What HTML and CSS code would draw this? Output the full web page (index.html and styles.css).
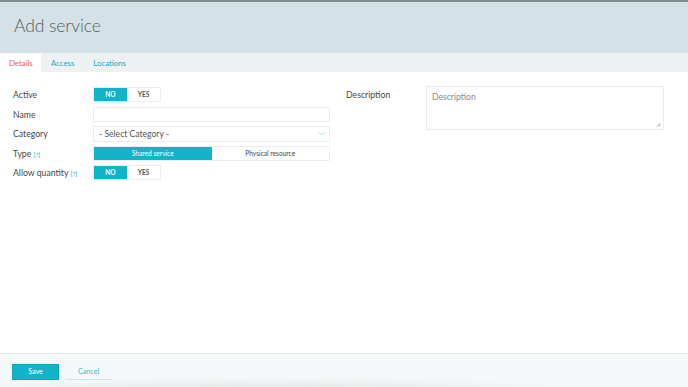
FILE: index.html
```html
<!DOCTYPE html>
<html>
<head>
<meta charset="utf-8">
<link rel="stylesheet" href="styles.css">
</head>
<body>
<div class="page">
  <header class="header">
    <h1 class="title">Add service</h1>
  </header>
  <nav class="tabs">
    <span class="tab active">Details</span>
    <span class="tab">Access</span>
    <span class="tab">Locations</span>
  </nav>
  <main class="content">
    <div class="col left">
      <div class="row">
        <label class="label">Active</label>
        <div class="toggle">
          <span class="opt on">NO</span>
          <span class="opt">YES</span>
        </div>
      </div>
      <div class="row">
        <label class="label">Name</label>
        <div class="input"></div>
      </div>
      <div class="row">
        <label class="label">Category</label>
        <div class="input select">
          <span>- Select Category -</span>
          <svg class="chev" width="7" height="5" viewBox="0 0 7 5"><path d="M0.5 1 L3.5 4 L6.5 1" fill="none" stroke="#8fd8e2" stroke-width="0.9"/></svg>
        </div>
      </div>
      <div class="row">
        <label class="label">Type <span class="help">[?]</span></label>
        <div class="seg">
          <span class="segopt on">Shared service</span>
          <span class="segopt">Physical resource</span>
        </div>
      </div>
      <div class="row">
        <label class="label">Allow quantity <span class="help">[?]</span></label>
        <div class="toggle">
          <span class="opt on">NO</span>
          <span class="opt">YES</span>
        </div>
      </div>
    </div>
    <div class="col right">
      <label class="label dlabel">Description</label>
      <div class="textarea">
        <span class="ph">Description</span>
        <svg class="grip" width="5" height="5" viewBox="0 0 5 5"><path d="M1 4.5 L4.5 1 M3 4.5 L4.5 3" stroke="#888" stroke-width="0.7"/></svg>
      </div>
    </div>
  </main>
  <footer class="footer">
    <button class="btn save">Save</button>
    <button class="btn cancel">Cancel</button>
  </footer>
</div>
</body>
</html>
```
FILE: styles.css
```css
* { box-sizing: border-box; }
html, body { margin: 0; padding: 0; }
body {
  width: 688px;
  height: 387px;
  overflow: hidden;
  font-family: Lato, "Noto Sans", sans-serif;
  color: #3a3a3a;
  background: #fff;
}
.page {
  display: flex;
  flex-direction: column;
  height: 387px;
}
.header {
  height: 53px;
  background: #d4e2e7;
  border-top: 2px solid #7d8b8c;
  display: flex;
  align-items: center;
  padding-left: 14px;
}
.title {
  margin: 0;
  font-weight: 300;
  font-size: 17.5px;
  color: #555c60;
  letter-spacing: -0.1px;
  padding-bottom: 5px;
}
.tabs {
  height: 19px;
  background: #edf1f2;
  display: flex;
  align-items: stretch;
}
.tab {
  font-size: 7.8px;
  color: #1aa9c1;
  display: flex;
  align-items: center;
  padding: 0 9px;
}
.tab:first-child { width: 41px; }
.tab:nth-child(2) { padding-left: 10px; padding-right: 10px; }
.tab.active {
  background: #fff;
  color: #ea5c53;
}
.content {
  flex: 1;
  display: flex;
  padding: 15px 0 0 13px;
}
.col.left {
  width: 317px;
  display: flex;
  flex-direction: column;
  gap: 4px;
}
.row {
  display: flex;
  align-items: center;
  height: 15.5px;
}
.label {
  width: 80px;
  font-size: 8.7px;
  color: #474747;
  flex: none;
}
.help {
  font-size: 6.3px;
  color: #1aa9c1;
}
.toggle {
  display: flex;
  height: 15px;
  border: 1px solid #eaeff0;
}
.opt {
  width: 33px;
  display: flex;
  align-items: center;
  justify-content: center;
  font-size: 6.5px;
  font-weight: 700;
  color: #555;
  background: #fff;
}
.opt.on {
  background: #11b4c9;
  color: #fff;
}
.input {
  width: 237px;
  height: 15.5px;
  border: 1px solid #e9eef0;
  background: #fff;
}
.select {
  display: flex;
  align-items: center;
  justify-content: space-between;
  padding: 0 4px 0 5px;
  font-size: 8.6px;
  color: #555;
}
.seg {
  display: flex;
  width: 237px;
  height: 15.5px;
  border: 1px solid #e9eef0;
}
.segopt {
  flex: 1;
  display: flex;
  align-items: center;
  justify-content: center;
  font-size: 6.6px;
  color: #444;
}
.segopt.on {
  background: #11b4c9;
  color: #fff;
}
.col.right {
  display: flex;
  align-items: flex-start;
  margin-left: 16px;
  margin-top: -1px;
}
.dlabel {
  padding-top: 3px;
}
.textarea {
  position: relative;
  width: 238px;
  height: 44px;
  border: 1px solid #e6ecee;
  padding: 5px 5px;
  font-size: 8.6px;
  line-height: 1.2;
}
.ph {
  color: #8a8a8a;
}
.grip {
  position: absolute;
  right: 2px;
  bottom: 2px;
}
.footer {
  position: relative;
  height: 34px;
  border-top: 1px solid #e4e9ea;
  background: #f5f8f8;
  display: flex;
  align-items: center;
  gap: 6px;
  padding: 2px 0 0 12px;
  overflow: hidden;
}
.footer::after {
  content: "";
  position: absolute;
  left: -40px;
  bottom: -14px;
  width: 620px;
  height: 24px;
  border-radius: 50%;
  background: radial-gradient(ellipse at center, rgba(0,0,0,0.07), rgba(0,0,0,0) 70%);
  pointer-events: none;
}
.btn {
  position: relative;
  z-index: 1;
  height: 16px;
  width: 47px;
  font-family: inherit;
  font-size: 7.2px;
  border: none;
  padding: 0;
  cursor: pointer;
}
.save {
  background: #11b4c9;
  color: #fff;
  border: 1px solid #0fa8bb;
}
.cancel {
  background: transparent;
  color: #3fbbd0;
  border-bottom: 1px solid #cfe4ea;
}
```
